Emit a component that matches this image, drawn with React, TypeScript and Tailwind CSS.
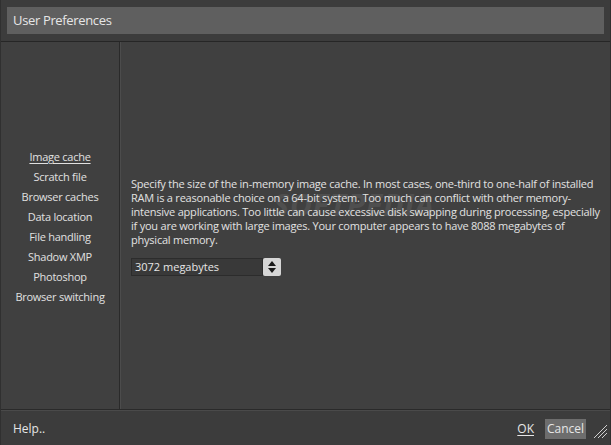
import { useState } from 'react'

const SECCIONES = [
  'Image cache',
  'Scratch file',
  'Browser caches',
  'Data location',
  'File handling',
  'Shadow XMP',
  'Photoshop',
  'Browser switching',
]

const LINEAS = [
  'Specify the size of the in-memory image cache. In most cases, one-third to one-half of installed',
  'RAM is a reasonable choice on a 64-bit system. Too much can conflict with other memory-',
  'intensive applications. Too little can cause excessive disk swapping during processing, especially',
  'if you are working with large images. Your computer appears to have 8088 megabytes of',
  'physical memory.',
]

export default function App() {
  const [activa, setActiva] = useState('Image cache')
  const [megas, setMegas] = useState(3072)

  return (
    <div
      className="relative flex h-[445px] w-[611px] flex-col overflow-hidden border-x border-[#303030] bg-[#3c3c3c] text-[#dcdcdc]"
      style={{ fontFamily: '"Open Sans", "DejaVu Sans", sans-serif' }}
    >
      {/* Barra de título */}
      <div className="px-[6px] pt-[7px] pb-[7px]">
        <div className="flex h-[27px] items-center bg-[#5f5f5f] pl-[6px] pt-[1px] text-[13px] tracking-[-0.35px] text-[#e6e6e6]">
          User Preferences
        </div>
      </div>
      <div className="h-px bg-[#262626]" />

      {/* Cuerpo */}
      <div className="flex flex-1 bg-[#404040]">
        <div className="flex w-[118px] flex-col items-center justify-center pt-[3px]">
          {SECCIONES.map((s) => (
            <button
              key={s}
              onClick={() => setActiva(s)}
              className={
                'h-[20px] text-[11px] leading-[20px] tracking-[-0.25px] text-[#e0e0e0] ' +
                (activa === s ? 'underline underline-offset-2' : '')
              }
            >
              {s}
            </button>
          ))}
        </div>
        <div className="w-px bg-[#2a2a2a]" />
        <div className="w-px bg-[#4c4c4c]" />
        <div className="flex flex-1 flex-col justify-center pl-[10px] pt-[2px]">
          <div className="text-[11px] leading-[14px] tracking-[-0.22px] text-[#e2e2e2]">
            {LINEAS.map((l) => (
              <div key={l} className="whitespace-nowrap">
                {l}
              </div>
            ))}
          </div>
          <div className="mt-[11px] flex h-[18px] w-[150px]">
            <div className="flex flex-1 items-center border border-[#2c2c2c] bg-[#393939] pl-[3px] text-[11px] text-[#e6e6e6]">
              {megas} megabytes
            </div>
            <div className="flex w-[18px] flex-col items-center justify-center gap-[2px] rounded-[2px] bg-[#d6d6d6]">
              <svg width="8" height="5" viewBox="0 0 8 5" onClick={() => setMegas(megas + 1024)}>
                <path d="M4 0 L8 5 L0 5 Z" fill="#1a1a1a" />
              </svg>
              <svg width="8" height="5" viewBox="0 0 8 5" onClick={() => setMegas(megas - 1024)}>
                <path d="M0 0 L8 0 L4 5 Z" fill="#1a1a1a" />
              </svg>
            </div>
          </div>
        </div>
      </div>

      {/* Pie */}
      <div className="h-px bg-[#2a2a2a]" />
      <div className="h-px bg-[#4a4a4a]" />
      <div className="flex h-[34px] items-center bg-[#3c3c3c] pl-[12px] pr-[2px] pt-[1px] text-[12px] text-[#e6e6e6]">
        <span>Help..</span>
        <span className="ml-auto underline underline-offset-2">OK</span>
        <button className="ml-[11px] h-[20px] w-[41px] bg-[#6d6d6d] text-[12px] text-[#e6e6e6]">
          Cancel
        </button>
        <svg width="16" height="16" viewBox="0 0 16 16" className="ml-[6px] mt-[4px]">
          <path d="M15 2 L2 15 M15 6 L6 15 M15 10 L10 15" stroke="#d0d0d0" strokeWidth="1" />
        </svg>
      </div>

      {/* marca de agua */}
      <div className="pointer-events-none absolute left-[272px] top-[182px] text-[30px] font-bold italic tracking-[1px] text-white opacity-[0.08]">
        SOFTPEDIA
      </div>
    </div>
  )
}
